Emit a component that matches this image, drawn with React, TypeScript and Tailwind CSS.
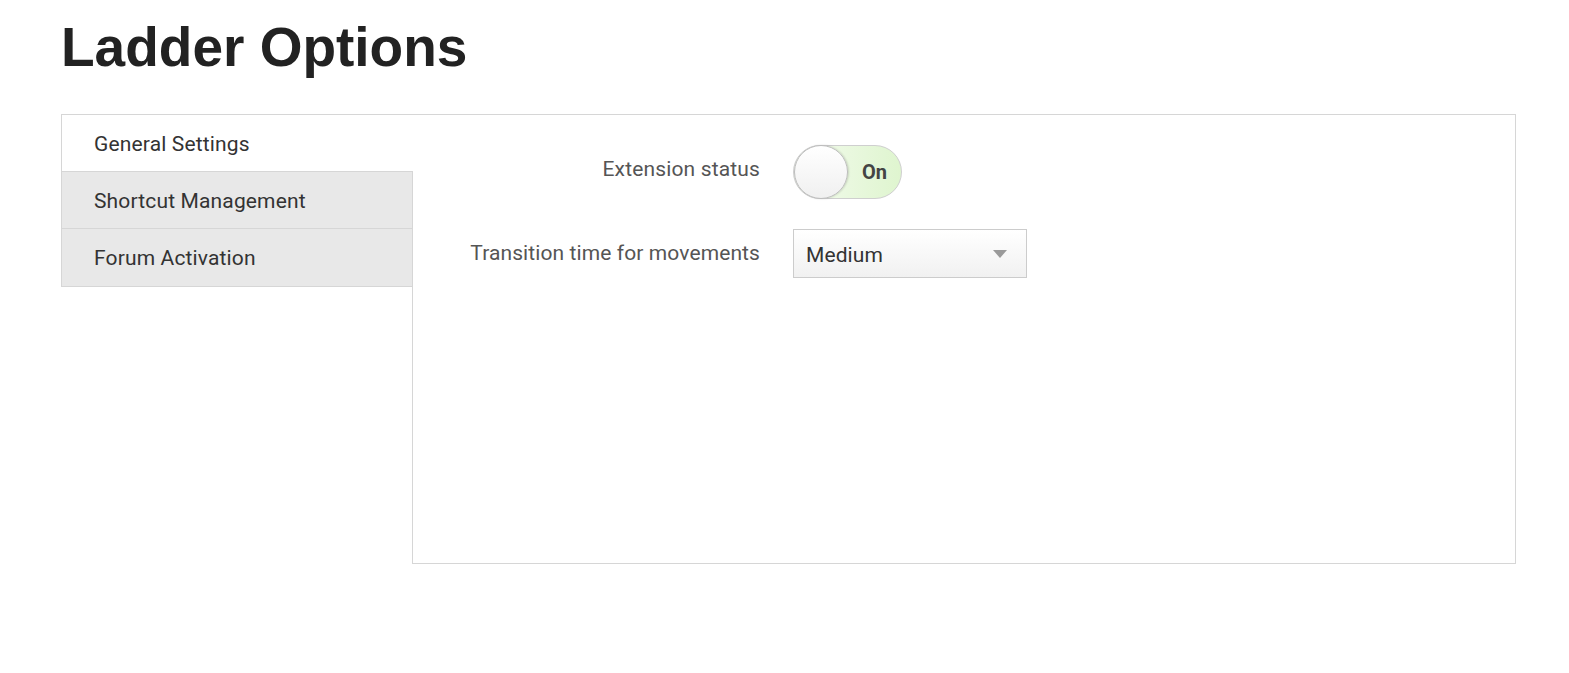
const tabs = ["General Settings", "Shortcut Management", "Forum Activation"];

function Toggle() {
  return (
    <div className="relative flex h-[54px] w-[109px] items-center rounded-full border border-[#cfcfcf] bg-gradient-to-r from-[#f4fbef] to-[#dff5cf]">
      <div className="absolute left-0 top-[-1px] h-[54px] w-[54px] rounded-full border border-[#bdbdbd] bg-gradient-to-b from-white to-[#f0f0f0] shadow-[1px_0_2px_rgba(0,0,0,0.15)]" />
      <span className="ml-[68px] text-[20px] font-bold text-[#444]">On</span>
    </div>
  );
}

function Select() {
  return (
    <div className="flex h-[49px] w-[234px] items-center justify-between border border-[#cccccc] bg-gradient-to-b from-white to-[#f1f1f1] pl-[12px] pr-[19px]">
      <span className="pt-[5px] text-[21px] tracking-[0.1px] text-[#333]">Medium</span>
      <svg width="14" height="8" viewBox="0 0 14 8">
        <path d="M0 0 L14 0 L7 8 Z" fill="#9a9a9a" />
      </svg>
    </div>
  );
}

export default function App() {
  return (
    <div className="min-h-screen bg-white px-[61px] pt-[20px] font-['Roboto',sans-serif]">
      <h1 className="font-['Liberation_Sans',Arial,sans-serif] text-[55px] font-bold leading-none text-[#222]">
        Ladder Options
      </h1>

      <div className="mt-[39px] flex w-[1455px]">
        <div className="flex w-[351px] shrink-0 flex-col">
          {tabs.map((t, i) =>
            i === 0 ? (
              <div
                key={t}
                className="relative z-10 -mr-px flex h-[57px] items-center border-l border-t border-[#d6d6d6] bg-white pl-[32px] pt-[4px] text-[21px] tracking-[0.15px] text-[#333]"
              >
                {t}
              </div>
            ) : (
              <div
                key={t}
                className={`flex items-center border-l border-t border-[#d6d6d6] bg-[#e8e8e8] pl-[32px] pt-[4px] text-[21px] tracking-[0.15px] text-[#333] ${
                  i === tabs.length - 1 ? "h-[59px] border-b pb-[1px]" : "h-[57px]"
                }`}
              >
                {t}
              </div>
            )
          )}
        </div>

        <div className="flex h-[450px] flex-1 flex-col gap-[30px] border border-[#d6d6d6] pt-[30px]">
          <div className="flex items-center">
            <div className="w-[347px] pb-[4px] text-right text-[21px] tracking-[0.15px] text-[#555]">
              Extension status
            </div>
            <div className="ml-[33px]">
              <Toggle />
            </div>
          </div>
          <div className="flex items-center">
            <div className="w-[347px] text-right text-[21px] tracking-[0.1px] text-[#555]">
              Transition time for movements
            </div>
            <div className="ml-[33px]">
              <Select />
            </div>
          </div>
        </div>
      </div>
    </div>
  );
}
